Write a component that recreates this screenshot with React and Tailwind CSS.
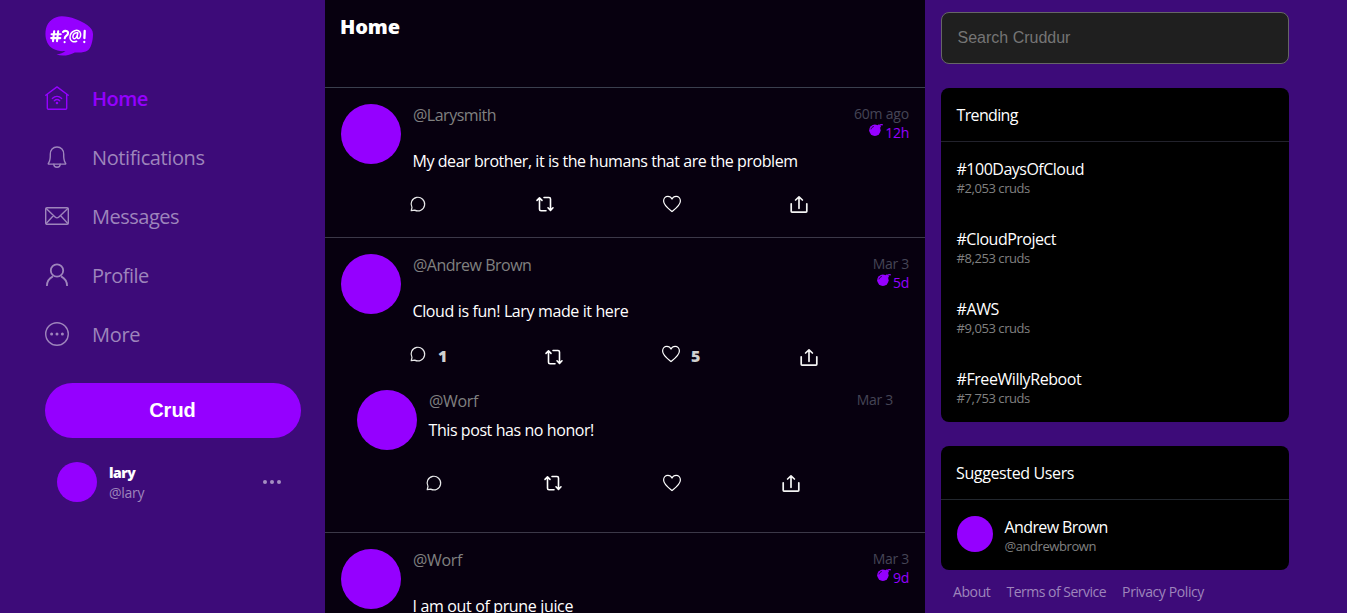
import React from 'react'

function Logo() {
  return (
    <svg className="h-[40px] w-[48px]" viewBox="0 0 48 40">
      <path
        fill="#9500ff"
        d="M16.8 .2C9.200 .2 2.800 5.200 1 12.500c-1.800 8.500.8 16.700 7 20.300 4.200 2.300 7.700 2.600 12.400 2.200-2.200 1.700-5 3-8.900 3.500 5.400 2 12.600 1.200 18.300-2 5.500.3 9.800.1 12.800-1.900 3.400-2.400 5.300-9.500 5.400-16.100.1-4.300-2.200-6.900-5.800-9.500C35.500 4.200 25.700.3 16.800.2Z"
      />
      <g fill="none" stroke="#fff" strokeWidth="2.100" strokeLinecap="round" strokeLinejoin="round">
        <path d="M9.200 15.200 8 25.200M13.200 15.200l-1.200 10M6.600 18.300h9.100M6.200 22.100h9.100" />
        <path d="M18 16c2-2.100 5.400-1 5 1.500-.3 2.100-2.900 2.300-3.300 4.800M19.600 26v.2" />
        <path strokeWidth="1.500" d="M32.800 16.800c-2.500-.6-4.600 1-4.900 3.600-.3 2.200 1.700 3.100 3 1.500.9-1.100 1.500-2.700 1.900-4.600-.7 2.600-1 5.400.7 5.200 1.900-.3 2.400-3 2-5.100-.6-2.600-3.100-3.700-5.800-2.700-3 1.200-4.900 4.100-4.700 7.200.2 3.300 3.500 4.700 6.700 3.300" />
        <path strokeWidth="2.300" d="m39.700 15-.3 7.100M39.300 25.900v.1" />
      </g>
    </svg>
  )
}

function HomeIcon() {
  return (
    <svg className="size-6" viewBox="0 0 24 24" fill="none" stroke="currentColor" strokeWidth="1.400" strokeLinecap="round" strokeLinejoin="round">
      <path d="M.7 9.200 12 .9l11.300 8.300M2.300 8.300v13.900c0 .6.400 1 1 1h17.400c.6 0 1-.4 1-1V8.300" />
      <path d="M7.300 12.400c2.800-2.500 6.600-2.500 9.400 0M9.300 14.700c1.600-1.400 3.800-1.400 5.400 0" />
      <circle cx="12" cy="17" r=".6" fill="currentColor" />
    </svg>
  )
}

function BellIcon() {
  return (
    <svg className="size-6" viewBox="0 0 24 24" fill="none" stroke="currentColor" strokeWidth="1.400" strokeLinecap="round" strokeLinejoin="round">
      <path d="M5.300 9.200C5.200 5 7.900 2 12 2s6.800 3 6.700 7.200c-.1 4 .3 6.500 1.500 8.400.6 1 .8 1.500.1 1.500H3.700c-.7 0-.5-.5.1-1.500 1.200-1.900 1.600-4.400 1.500-8.400Z" />
      <path d="M8.800 19.300c0 1.800 1.400 3 3.200 3s3.200-1.200 3.200-3" />
    </svg>
  )
}

function MailIcon() {
  return (
    <svg className="size-6" viewBox="0 0 24 24" fill="none" stroke="currentColor" strokeWidth="1.400" strokeLinecap="round" strokeLinejoin="round">
      <rect x=".7" y="3.700" width="22.600" height="16.600" rx="1.300" />
      <path d="m1.200 4.500 8.900 8.500c1.200 1.100 2.600 1.100 3.800 0l8.900-8.500M1.200 19.500l7.300-7.900M22.800 19.500l-7.300-7.900" />
    </svg>
  )
}

function UserIcon() {
  return (
    <svg className="size-6" viewBox="0 0 24 24" fill="none" stroke="currentColor" strokeWidth="1.800" strokeLinecap="butt">
      <circle cx="12" cy="7.500" r="6.200" />
      <path d="M1.900 23c0-4.200 2.200-7.600 6-9.600M22.100 23c0-4.200-2.200-7.600-6-9.600" />
    </svg>
  )
}

function MoreIcon() {
  return (
    <svg className="size-6" viewBox="0 0 24 24">
      <circle cx="12" cy="12" r="11.300" fill="none" stroke="currentColor" strokeWidth="1.400" />
      <g fill="currentColor">
        <circle cx="6.600" cy="12" r="1.500" />
        <circle cx="12" cy="12" r="1.500" />
        <circle cx="17.400" cy="12" r="1.500" />
      </g>
    </svg>
  )
}

function ReplyIcon() {
  return (
    <svg className="size-6" viewBox="0 0 24 24" fill="none" stroke="#e8e8ea" strokeWidth="1.200" strokeLinejoin="round">
      <path d="M5.200 18.700 6 15.500A6.800 6.800 0 1 1 8.700 18.100Z" />
    </svg>
  )
}

function RepostIcon() {
  return (
    <svg className="size-6" viewBox="0 0 24 24" fill="none" stroke="#fff" strokeWidth="1.600" strokeLinecap="round" strokeLinejoin="round">
      <path d="M4 8.400 6.500 5.800 9 8.400M6.500 6.200v11c0 .9.600 1.500 1.500 1.500h5M20 15.800l-2.500 2.600-2.500-2.600M17.500 18V7c0-.9-.6-1.500-1.500-1.500h-5" />
    </svg>
  )
}

function HeartIcon() {
  return (
    <svg className="size-6" viewBox="0 0 24 24" fill="none" stroke="#fff" strokeWidth="1.200" strokeLinejoin="round">
      <path d="M12 19.600C9.500 17.500 3.600 13.300 3.600 9c0-2.700 1.900-4.600 4.300-4.600 1.800 0 3.300 1 4.100 2.700.8-1.700 2.300-2.700 4.100-2.700 2.400 0 4.300 1.900 4.300 4.600 0 4.300-5.900 8.500-8.400 10.600Z" />
    </svg>
  )
}

function ShareIcon() {
  return (
    <svg className="size-6" viewBox="0 0 24 24" fill="none" stroke="#f4f4f4" strokeWidth="1.700" strokeLinecap="round" strokeLinejoin="round">
      <path d="M4.200 11.800v7.500c0 .5.300.8.800.8h14c.5 0 .8-.3.800-.8v-7.500M12 16.300V5.200M8.600 8 12 4.800 15.400 8" />
    </svg>
  )
}

function BombIcon() {
  return (
    <svg className="h-[12px] w-[14px]" viewBox="0 0 14 12">
      <circle cx="5.900" cy="6.300" r="5.700" fill="#9500ff" />
      <path d="m8 1.400 2-1.200 2 2.400-1.200 1.600Z" fill="#9500ff" />
      <path d="M10.500 1.700C11.300.6 12.500.5 13.800.9" fill="none" stroke="#9500ff" strokeWidth="1.200" />
      <path d="M2 5.300C2.400 3.800 3.300 2.900 4.800 2.500" fill="none" stroke="#07000f" strokeWidth=".8" />
    </svg>
  )
}

const navItems = [
  { label: 'Home', icon: HomeIcon, style: 'text-[#9500ff]', text: 'font-semibold tracking-[-0.500px]' },
  { label: 'Notifications', icon: BellIcon, style: 'text-[#9e85bc]', text: 'tracking-[-0.400px]' },
  { label: 'Messages', icon: MailIcon, style: 'text-[#9e85bc]', text: 'tracking-[-0.500px]' },
  { label: 'Profile', icon: UserIcon, style: 'text-[#9e85bc]', text: 'tracking-[-0.500px]' },
  { label: 'More', icon: MoreIcon, style: 'text-[#9e85bc]', text: 'tracking-[-0.300px]' },
]

function Sidebar() {
  return (
    <aside className="flex w-[325px] shrink-0 flex-col pr-6 pl-[45px]">
      <div className="h-[69px] pt-4">
        <Logo />
      </div>
      <nav>
        {navItems.map(({ label, icon: Icon, style, text }) => (
          <a key={label} className={`flex h-[59px] items-center gap-[23px] text-[20px] ${style}`}>
            <span className="-mt-px">
              <Icon />
            </span>
            <span className={text}>{label}</span>
          </a>
        ))}
      </nav>
      <button className="mt-[19px] h-[55px] rounded-full bg-[#9500ff] pr-px pb-[2px] font-['Liberation_Sans',sans-serif] text-[20px] font-bold text-white">
        Crud
      </button>
      <div className="mt-[23px] flex items-center pr-[20px] pl-3">
        <span className="size-10 rounded-full bg-[#9500ff]" />
        <div className="ml-3 flex-1 text-[14px] leading-[21px]">
          <div className="-mb-px pt-px font-extrabold tracking-[-0.500px] text-white">lary</div>
          <div className="tracking-[-0.300px] text-[#9e85bc]">@lary</div>
        </div>
        <div className="flex gap-[3px]">
          <span className="size-1 rounded-full bg-[#a58fc2]" />
          <span className="size-1 rounded-full bg-[#a58fc2]" />
          <span className="size-1 rounded-full bg-[#a58fc2]" />
        </div>
      </div>
    </aside>
  )
}

function Count({ children }) {
  return <span className="ml-2 pt-[2px] text-[16px] leading-6 font-extrabold text-[#d0d0d0]">{children}</span>
}

function Post({ handle, handleStyle, time, timeStyle, expires, message, messageStyle, children }) {
  return (
    <div className="flex">
      <span className="size-[60px] shrink-0 rounded-full bg-[#9500ff]" />
      <div className="ml-[12px] flex-1">
        <div className="flex h-[23px] justify-between">
          <span className={`text-[16px] leading-[23px] text-[#808080] ${handleStyle}`}>{handle}</span>
          <div className="text-right text-[14px] leading-[19px]">
            <div className={`text-[#454556] ${timeStyle}`}>{time}</div>
            {expires && (
              <div className="flex justify-end gap-[2px] text-[#9500ff]">
                <span className="pt-px">
                  <BombIcon />
                </span>
                <span className="tracking-[-0.300px]">{expires}</span>
              </div>
            )}
          </div>
        </div>
        <p className={`-ml-[0.500px] text-[16px] whitespace-nowrap text-white ${messageStyle}`}>{message}</p>
        {children}
      </div>
    </div>
  )
}

function Feed() {
  return (
    <main className="flex w-[600px] shrink-0 flex-col overflow-hidden bg-[#07000f]">
      <header className="h-[88px] shrink-0 border-b border-[#3a3f4e] pt-[15px] pl-[15px] text-[20px] leading-6 font-extrabold tracking-[-0.100px] text-white">
        Home
      </header>

      <article className="h-[150px] shrink-0 border-b border-[#3b3848] px-4 pt-4">
        <Post
          handle="@Larysmith"
          handleStyle="tracking-[-0.500px]"
          time="60m ago"
          timeStyle="tracking-[-0.200px]"
          expires="12h"
          message="My dear brother, it is the humans that are the problem"
          messageStyle="mt-[22px] leading-6 tracking-[-0.435px]"
        >
          <div className="mt-[19px] -ml-[7px] grid grid-cols-[127px_127px_127px_24px]">
            <ReplyIcon />
            <RepostIcon />
            <HeartIcon />
            <ShareIcon />
          </div>
        </Post>
      </article>

      <article className="h-[295px] shrink-0 border-b border-[#3b3848] px-4 pt-4">
        <Post
          handle="@Andrew Brown"
          handleStyle="tracking-[-0.500px]"
          time="Mar 3"
          timeStyle="tracking-[-0.300px]"
          expires="5d"
          message="Cloud is fun! Lary made it here"
          messageStyle="mt-[22px] leading-6 tracking-[-0.380px]"
        >
          <div className="mt-[19px] -ml-[7px] grid h-[30px] grid-cols-[136px_117px_138px_24px]">
            <div className="flex">
              <ReplyIcon />
              <Count>1</Count>
            </div>
            <div className="pt-[3px]">
              <RepostIcon />
            </div>
            <div className="flex">
              <HeartIcon />
              <Count>5</Count>
            </div>
            <div className="pt-[3px]">
              <ShareIcon />
            </div>
          </div>
        </Post>
        <div className="mt-[18px] px-4">
          <Post
            handle="@Worf"
            handleStyle="tracking-[-0.300px]"
            time="Mar 3"
            timeStyle="tracking-[-0.300px]"
            message="This post has no honor!"
            messageStyle="leading-[34px] tracking-[-0.420px]"
          >
            <div className="mt-6 -ml-[7px] grid grid-cols-[119px_119px_119px_24px]">
              <ReplyIcon />
              <RepostIcon />
              <HeartIcon />
              <ShareIcon />
            </div>
          </Post>
        </div>
      </article>

      <article className="shrink-0 px-4 pt-4">
        <Post
          handle="@Worf"
          handleStyle="tracking-[-0.300px]"
          time="Mar 3"
          timeStyle="tracking-[-0.300px]"
          expires="9d"
          message="I am out of prune juice"
          messageStyle="mt-[22px] leading-6 tracking-[-0.350px]"
        />
      </article>
    </main>
  )
}

const trends = [
  { tag: '#100DaysOfCloud', count: '#2,053 cruds', style: 'tracking-[-0.500px]' },
  { tag: '#CloudProject', count: '#8,253 cruds', style: 'tracking-[-0.500px]' },
  { tag: '#AWS', count: '#9,053 cruds', style: 'tracking-[-0.400px]' },
  { tag: '#FreeWillyReboot', count: '#7,753 cruds', style: 'tracking-[-0.430px]' },
]

function Discover() {
  return (
    <aside className="flex w-[364px] shrink-0 flex-col pt-3 pl-4">
      <input
        className="h-[52px] shrink-0 rounded-lg border border-[#666666] bg-[#1f1f1f] px-[15.500px] font-['Liberation_Sans',sans-serif] text-[16px] placeholder:text-[#757575]"
        placeholder="Search Cruddur"
      />
      <section className="mt-6 overflow-hidden rounded-lg bg-black">
        <h2 className="flex h-[54px] items-center border-b border-[#22222c] pt-px pl-[15.500px] text-[16px] tracking-[-0.650px] text-white">
          Trending
        </h2>
        {trends.map(({ tag, count, style }) => (
          <div key={tag} className="h-[70px] pt-[17px] pl-[15.500px]">
            <div className={`text-[16px] leading-5 text-white ${style}`}>{tag}</div>
            <div className="text-[13px] leading-[18px] tracking-[-0.430px] text-[#808080]">{count}</div>
          </div>
        ))}
      </section>
      <section className="mt-6 overflow-hidden rounded-lg bg-black">
        <h2 className="flex h-[54px] items-center border-b border-[#22272e] pt-px pl-[15px] text-[16px] tracking-[-0.370px] text-white">
          Suggested Users
        </h2>
        <div className="flex h-[70px] pl-4">
          <span className="mt-4 size-9 rounded-full bg-[#9500ff]" />
          <div className="ml-3 pt-[17px]">
            <div className="-ml-[0.500px] text-[16px] leading-5 tracking-[-0.600px] text-white">Andrew Brown</div>
            <div className="-ml-[0.500px] text-[13px] leading-[18px] tracking-[-0.430px] text-[#808080]">@andrewbrown</div>
          </div>
        </div>
      </section>
      <footer className="mt-[11px] flex gap-4 pl-3 text-[14px] leading-[21px] whitespace-nowrap text-[#9e85bc]">
        <a className="tracking-[-0.400px]">About</a>
        <a className="tracking-[-0.500px]">Terms of Service</a>
        <a className="tracking-[-0.400px]">Privacy Policy</a>
      </footer>
    </aside>
  )
}

export default function App() {
  return (
    <div className="flex h-screen overflow-hidden bg-[#3d0b79] font-['Open_Sans','Noto_Sans',sans-serif]">
      <Sidebar />
      <Feed />
      <Discover />
    </div>
  )
}
